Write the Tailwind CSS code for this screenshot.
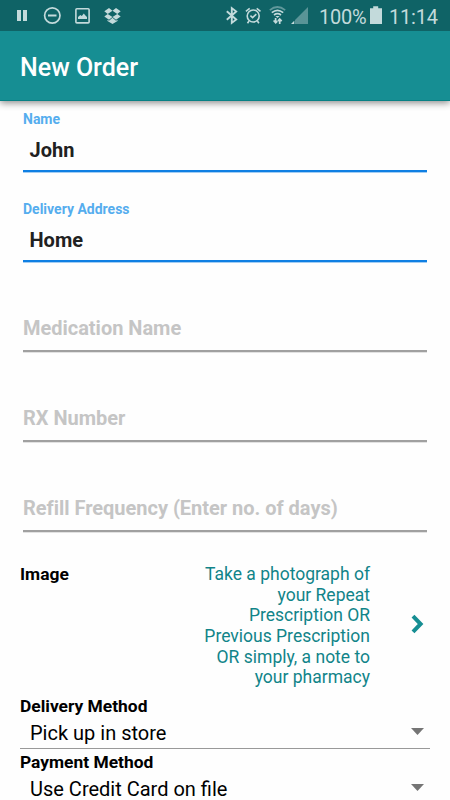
<!DOCTYPE html>
<html lang="en">
<head>
<meta charset="utf-8">
<title>New Order</title>
<script src="https://cdn.jsdelivr.net/npm/@tailwindcss/browser@4"></script>
</head>
<body class="w-[450px] h-[800px] overflow-hidden bg-[#fefefe] font-[Roboto,sans-serif] text-black">
<header class="relative z-10 shadow-[0_2px_7px_rgba(0,0,0,0.45)]">
  <div class="flex h-[31px] items-center bg-[#0f6366] text-[#c3dadb]">
    <svg class="ml-[17px] w-[10px] h-[31px]" viewBox="0 0 10 31" fill="currentColor"><path d="M0 10h4v11H0zM6 10h4v11H6z"/></svg>
    <svg class="ml-[16px] w-[18px] h-[31px]" viewBox="0 0 18 31" fill="none" stroke="currentColor"><circle cx="9.3" cy="15.5" r="7.7" stroke-width="1.7"/><path d="M5 15.5h8.5" stroke-width="2"/></svg>
    <svg class="ml-[14px] w-[15px] h-[31px]" viewBox="0 0 15 31" fill="none" stroke="currentColor"><rect x=".9" y="8.7" width="13.2" height="14.2" rx="1" stroke-width="1.6"/><path d="M3 19v-2l2.3-2 1.5 1 2-2.5 1.4 1.7 1.8 1.8v2z" fill="currentColor" stroke="none"/></svg>
    <svg class="ml-[14px] w-[17px] h-[31px]" viewBox="0 0 17 31" fill="currentColor"><path d="M5 8l3.5 2.8L3.7 14 .3 11.2zM12 8l4.7 3.2-3.4 2.8-4.8-3.2zM.3 16.5L3.7 14l4.8 3L5 19.7zM8.5 17l4.8-3 3.4 2.5-4.7 3.2zM3.5 19.7l1.5 1 3.5-2.9 3.5 2.9 1.5-1v1.2l-5 3-5-3z"/></svg>
    <svg class="ml-[105px] w-[12px] h-[31px]" viewBox="0 0 12 31" fill="none" stroke="currentColor" stroke-width="1.9"><path d="M.8 11.3l9.4 8.2-4.4 3.4V8.1l4.4 3.4-9.4 8.2"/></svg>
    <svg class="ml-[7px] w-[17px] h-[31px]" viewBox="0 0 17 31" fill="none" stroke="currentColor" stroke-width="1.6"><circle cx="8.2" cy="16" r="6"/><path d="M5.4 15.7l2.2 2 3.7-3.5M.9 11.4l3.8-3M11.7 8.4l3.8 3M4 21l-1.5 2.2M12.4 21l1.5 2.2"/></svg>
    <svg class="ml-[7px] w-[18px] h-[31px]" viewBox="0 0 18 31" fill="none" stroke="currentColor" stroke-width="1.7"><path d="M.8 10.2q7.5-6.4 15.4 0" opacity=".45"/><path d="M2.8 12.6q5.6-4.6 11.4 0M5 15q3.4-2.6 7 0"/><path d="M6.4 16h4.2l-2.1 2z" fill="currentColor" stroke="none"/><path d="M6.6 18v4.6M4.6 20.5l2.1 2.3 1.6-1.7M10.7 24v-4.8M8.9 21l1.8-2 2 2.1"/></svg>
    <svg class="ml-[4px] w-[18px] h-[31px]" viewBox="0 0 18 31" fill="currentColor"><path d="M17 7v17H4v-4z" opacity=".42"/><path d="M3.3 20.7V24H0z"/></svg>
    <span class="ml-[10px] w-[47px] whitespace-nowrap text-[20px] leading-[31px] tracking-[-0.2px] mt-[3px]">100%</span>
    <svg class="ml-[4px] w-[12px] h-[31px]" viewBox="0 0 12 31" fill="currentColor"><path d="M3.2 6.3h5v2H12V24H0V8.3h3.2z"/></svg>
    <span class="ml-[7px] whitespace-nowrap text-[20px] leading-[31px] tracking-[-0.2px] mt-[3px]">11:14</span>
  </div>
  <div class="flex h-[70px] items-center border-b border-[#078084] bg-[#168e93] pl-5 pt-[5px]">
    <h1 class="text-[25px] font-medium leading-[30px] text-white">New Order</h1>
  </div>
</header>
<main>
  <label class="block h-[90px] px-[23px] pt-[10px]">
    <span class="block text-[14px] font-bold leading-4 text-[#55adee]">Name</span>
    <span class="mt-[10px] block h-[35px] border-b-2 border-[#0f7fe3] pl-[6.5px] text-[20px] font-bold leading-[26px] text-[#212121] shadow-[0_1px_0_#a3cdf3]">John</span>
  </label>
  <label class="block h-[90px] px-[23px] pt-[10px]">
    <span class="block text-[14px] font-bold leading-4 text-[#55adee]">Delivery Address</span>
    <span class="mt-[10px] block h-[35px] border-b-2 border-[#0f7fe3] pl-[6.5px] text-[20px] font-bold leading-[26px] text-[#212121] shadow-[0_1px_0_#a3cdf3]">Home</span>
  </label>
  <div class="h-[90px] px-[23px] pt-[35px]"><div class="h-[36px] border-b-2 border-[#a0a0a0] text-[20px] font-bold leading-[25px] tracking-[-0.02px] text-[#c5c5c5] shadow-[0_1px_0_#e2e2e2]">Medication Name</div></div>
  <div class="h-[90px] px-[23px] pt-[35px]"><div class="h-[36px] border-b-2 border-[#a0a0a0] text-[20px] font-bold leading-[25px] tracking-[-0.02px] text-[#c5c5c5] shadow-[0_1px_0_#e2e2e2]">RX Number</div></div>
  <div class="h-[90px] px-[23px] pt-[35px]"><div class="h-[36px] border-b-2 border-[#a0a0a0] text-[20px] font-bold leading-[25px] tracking-[-0.02px] text-[#c5c5c5] shadow-[0_1px_0_#e2e2e2]">Refill Frequency (Enter no. of days)</div></div>
  <section class="flex h-[145px] justify-between pl-5 pr-[26px] pt-[13px]">
    <h2 class="text-[17.4px] font-bold leading-[21px]">Image</h2>
    <div class="flex h-[124px] items-center">
      <p class="mr-[41px] text-right text-[17.5px] leading-[20.6px] text-[#118489]">Take a photograph of<br>your Repeat<br>Prescription OR<br>Previous Prescription<br>OR simply, a note to<br>your pharmacy</p>
      <svg class="mt-[-4px] h-[20px] w-[13px]" viewBox="0 0 13 20" fill="none" stroke="#168e93" stroke-width="4"><path d="M2 2.2L9.6 10 2 17.8"/></svg>
    </div>
  </section>
  <section class="mx-5 h-[53px] border-b border-[#999]">
    <h2 class="text-[17.4px] font-bold leading-5">Delivery Method</h2>
    <div class="flex h-[32px] items-center justify-between pl-[10px] pr-[6px] text-[20px] leading-8"><span class="pt-[2px]">Pick up in store</span><svg class="mb-[2px] h-[7px] w-[13px]" viewBox="0 0 13 7"><path d="M0 0h13L6.5 7z" fill="#757575"/></svg></div>
  </section>
  <section class="mx-5 pt-[3px]">
    <h2 class="text-[17.4px] font-bold leading-5">Payment Method</h2>
    <div class="flex h-[32px] items-center justify-between pl-[10px] pr-[6px] text-[20px] leading-8"><span class="pt-[2px]">Use Credit Card on file</span><svg class="mb-[2px] h-[7px] w-[13px]" viewBox="0 0 13 7"><path d="M0 0h13L6.5 7z" fill="#757575"/></svg></div>
  </section>
</main>
</body>
</html>
